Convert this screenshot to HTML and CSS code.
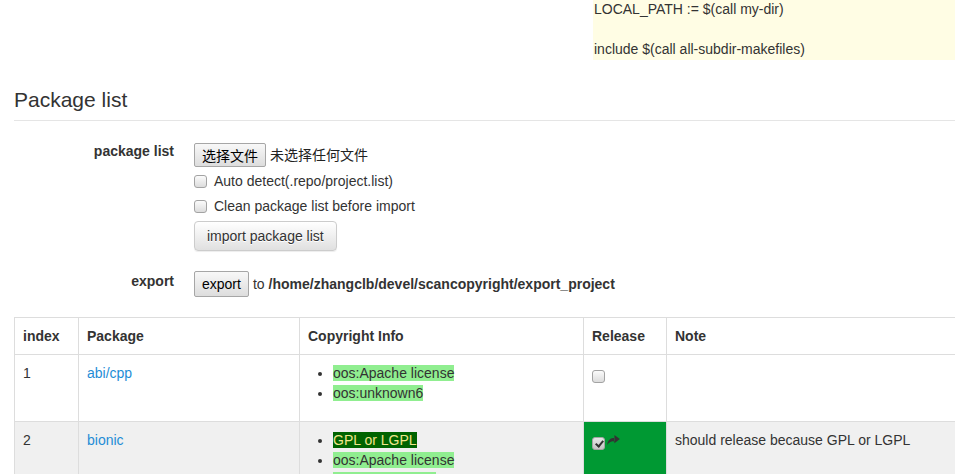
FILE: index.html
```
<!DOCTYPE html>
<html lang="zh-CN">
<head>
<meta charset="utf-8">
<title>Package list</title>
<link rel="stylesheet" href="styles.css">
</head>
<body>
<div class="page">
  <div class="top">
    <div class="mk">LOCAL_PATH := $(call my-dir)<br><br>include $(call all-subdir-makefiles)</div>
  </div>

  <h2 class="legend">Package list</h2>

  <div class="form">
    <div class="group">
      <div class="label">package list</div>
      <div class="controls">
        <div class="file"><span class="native-btn cjk">选择文件</span><span class="file-none cjk">未选择任何文件</span></div>
        <label class="check"><input type="checkbox" class="cb">Auto detect(.repo/project.list)</label>
        <label class="check"><input type="checkbox" class="cb">Clean package list before import</label>
        <div><button class="btn">import package list</button></div>
      </div>
    </div>
    <div class="group group-export">
      <div class="label">export</div>
      <div class="controls export">
        <button class="native-btn">export</button>
        <span class="to">to</span>
        <b>/home/zhangclb/devel/scancopyright/export_project</b>
      </div>
    </div>
  </div>

  <div class="table-wrap">
    <table class="pkg">
      <colgroup>
        <col class="c-index"><col class="c-pkg"><col class="c-copy"><col class="c-rel"><col class="c-note">
      </colgroup>
      <thead>
        <tr><th>index</th><th>Package</th><th>Copyright Info</th><th>Release</th><th>Note</th></tr>
      </thead>
      <tbody>
        <tr>
          <td>1</td>
          <td><a href="#" class="link">abi/cpp</a></td>
          <td><ul class="lics"><li><span class="lic">oos:Apache license</span></li><li><span class="lic">oos:unknown6</span></li></ul></td>
          <td><div class="rel"><input type="checkbox" class="cb"></div></td>
          <td></td>
        </tr>
        <tr class="grey">
          <td>2</td>
          <td><a href="#" class="link">bionic</a></td>
          <td><ul class="lics"><li><span class="gpl">GPL or LGPL</span></li><li><span class="lic">oos:Apache license</span></li><li><span class="lic">oos:BSD license</span></li></ul></td>
          <td class="released"><div class="rel"><input type="checkbox" class="cb" checked><svg class="share" viewBox="0 0 14 11" width="13" height="10"><path d="M8 0 L14 4.5 L8 9 Z M8.5 3 C3.5 3 0.5 6 0 11 C2 8 4.5 6.6 8.5 6.6 Z" fill="#333"/></svg></div></td>
          <td>should release because GPL or LGPL</td>
        </tr>
      </tbody>
    </table>
  </div>
</div>
</body>
</html>
```
FILE: styles.css
```
html, body {
  margin: 0;
  padding: 0;
  overflow: hidden;
  background: #fff;
}
body {
  font-family: "Liberation Sans", Arial, sans-serif;
  font-size: 14px;
  line-height: 20px;
  color: #333;
}
.page {
  padding-left: 14px;
}
.top {
  display: flex;
  justify-content: flex-end;
}
.mk {
  width: 361px;
  padding-left: 1px;
  background: #fffde4;
  margin-top: -1px;
  padding-bottom: 1px;
}
.legend {
  margin: 25px 0 20px;
  padding: 0 0 5px;
  font-size: 21px;
  line-height: 30px;
  font-weight: normal;
  border-bottom: 1px solid #e5e5e5;
}
.group {
  display: flex;
  gap: 20px;
}
.group-export {
  margin-top: 20px;
}
.label {
  width: 160px;
  flex: none;
  text-align: right;
  font-weight: bold;
}
.controls {
  display: flex;
  flex-direction: column;
  align-items: flex-start;
}
.cjk {
  font-family: "Liberation Sans", "Noto Sans CJK SC", sans-serif;
}
.file {
  margin-top: 2px;
  display: flex;
  align-items: center;
}
.native-btn {
  display: inline-block;
  font-size: 14px;
  line-height: 20px;
  padding: 1px 7px;
  color: #000;
  border: 1px solid #a6a6a6;
  border-radius: 2px;
  background: linear-gradient(#f8f8f8, #dddddd);
  font-family: inherit;
}
.file .native-btn {
  font-family: "Noto Sans CJK SC", sans-serif;
}
.file-none {
  margin-left: 4px;
  color: #222;
}
.check {
  display: flex;
  align-items: center;
  height: 20px;
  margin-top: 4px;
}
.check + .check {
  margin-top: 5px;
}
.check .cb {
  margin: 0 7px 0 0;
}
.cb {
  appearance: none;
  -webkit-appearance: none;
  width: 13px;
  height: 13px;
  box-sizing: border-box;
  border: 1px solid #a3a3a3;
  border-radius: 3px;
  background: linear-gradient(#fbfbfb, #dcdcdc);
  position: relative;
  flex: none;
  margin: 0;
}
.cb:checked {
  background: linear-gradient(#e6e6e6, #c4c4c4);
}
.cb:checked::after {
  content: "";
  position: absolute;
  left: 3.5px;
  top: 1px;
  width: 3px;
  height: 6px;
  border: solid #333;
  border-width: 0 2px 2px 0;
  transform: rotate(40deg);
}
.btn {
  margin-top: 5px;
  font-family: inherit;
  font-size: 14px;
  line-height: 18px;
  padding: 5px 12px;
  color: #333;
  border: 1px solid #ccc;
  border-radius: 4px;
  background: linear-gradient(#ffffff, #e0e0e0);
  text-shadow: 0 1px 0 #fff;
  box-shadow: 0 1px 1px rgba(0,0,0,0.075);
}
.export {
  flex-direction: row;
  align-items: center;
  height: 26px;
}
.export .native-btn {
  padding: 2px 7px;
}
.to {
  margin: 0 4px;
}
.table-wrap {
  margin-top: 20px;
  overflow: hidden;
}
.pkg {
  border-collapse: collapse;
  table-layout: fixed;
  width: 1052px;
}
.c-index { width: 64px; }
.c-pkg { width: 221px; }
.c-copy { width: 284px; }
.c-rel { width: 83px; }
.c-note { width: 400px; }
.pkg th, .pkg td {
  border: 1px solid #ddd;
  padding: 8px;
  text-align: left;
  vertical-align: top;
}
.pkg th {
  font-weight: bold;
  vertical-align: bottom;
}
.grey td {
  background: #f0f0f0;
}
.grey td.released {
  background: #009933;
}
.link {
  color: #1f8dd6;
  text-decoration: none;
}
.lics {
  margin: 0 0 10px;
  padding-left: 25px;
}
.lic {
  background: #90ee90;
}
.gpl {
  background: #006400;
  color: #f0e68c;
}
.rel {
  display: flex;
  align-items: flex-start;
  margin-top: 7px;
}
.share {
  margin-left: 2px;
  margin-top: -2px;
}
```
